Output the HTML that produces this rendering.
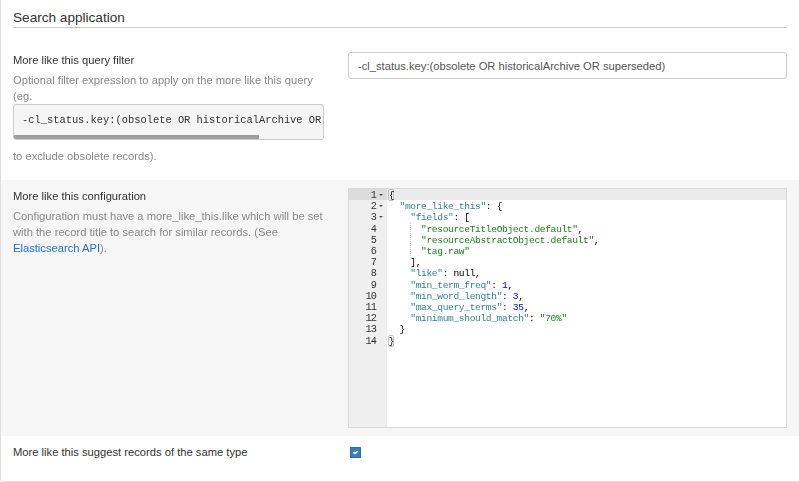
<!DOCTYPE html>
<html><head><meta charset="utf-8">
<style>
*{box-sizing:border-box}
html,body{margin:0;padding:0;background:#fff;width:799px;height:482px;overflow:hidden;position:relative;font-family:"Liberation Sans",sans-serif}
.a{position:absolute;white-space:pre}
.lbl{font-size:11.2px;line-height:16px;color:#333}
.g{will-change:transform}
.dsc{font-size:11.2px;line-height:16px;color:#888}
#lb{position:absolute;left:0;top:-20px;width:800px;height:502px;border:1px solid #ddd;border-radius:3px}
#h{left:13px;top:8px;font-size:13.6px;line-height:20px;color:#333}
#hr{position:absolute;left:13px;top:27px;width:774px;height:1px;background:#ccc}
#code1{position:absolute;left:13px;top:104px;width:311px;height:36px;background:#f5f5f5;border:1px solid #ccc;border-radius:3px;overflow:hidden}
#code1 span{will-change:transform;position:absolute;left:8px;top:7px;font-family:"Liberation Mono",monospace;font-size:10.4px;line-height:16px;color:#333;white-space:pre}
#thumb{position:absolute;left:0px;top:30px;width:245px;height:4px;background:#9e9e9e}
#inp{position:absolute;left:348px;top:52px;width:439px;height:27px;border:1px solid #ccc;border-radius:3px;background:#fff}
#inp span{position:absolute;left:9px;top:5px;font-size:11.2px;line-height:16px;color:#555;white-space:pre}
#gray{position:absolute;left:1px;top:180px;width:798px;height:256px;background:#f6f6f6}
#ed{will-change:transform;position:absolute;left:348px;top:188px;width:439px;height:240px;border:1px solid #dadada;background:#fff;overflow:hidden}
#gut{position:absolute;left:0;top:0;width:38px;height:238px;background:#efefef}
.row{position:absolute;left:0;height:11.2px;width:437px}
.ln{position:absolute;left:0;top:1px;width:27.2px;text-align:right;font-family:"Liberation Mono",monospace;font-size:10.2px;letter-spacing:-0.72px;line-height:11.2px;color:#333}
.fw{position:absolute;left:29.8px;top:4.8px;width:0;height:0;border-left:2.6px solid transparent;border-right:2.6px solid transparent;border-top:2.6px solid #555}
.cd{position:absolute;left:39.7px;top:1px;font-family:"Liberation Mono",monospace;font-size:9.6px;letter-spacing:-0.36px;line-height:11.2px;color:#000;white-space:pre}
.k{color:#318495}.s{color:#1a7f1a}.n{color:#0000cd}
#cb{position:absolute;left:350px;top:447px;width:11px;height:11px;background:#3a7ac2;border:1px solid #2d6cb2;border-radius:0.5px}
a{color:#1f6ee8;text-decoration:none}
</style></head><body>
<div id="lb"></div>
<div class="a" id="h">Search application</div>
<div id="hr"></div>

<div class="g a lbl" style="left:13px;top:52px">More like this query filter</div>
<div class="g a dsc" style="left:13px;top:72px">Optional filter expression to apply on the more like this query</div>
<div class="g a dsc" style="left:13px;top:88px">(eg.</div>
<div id="code1"><span>-cl_status.key:(obsolete OR historicalArchive OR superseded)</span><div id="thumb"></div></div>
<div class="g a dsc" style="left:13px;top:148px">to exclude obsolete records).</div>
<div id="inp"><span>-cl_status.key:(obsolete OR historicalArchive OR superseded)</span></div>

<div id="gray"></div>
<div class="g a lbl" style="left:13px;top:188px">More like this configuration</div>
<div class="g a dsc" style="left:13px;top:208px">Configuration must have a more_like_this.like which will be set</div>
<div class="g a dsc" style="left:13px;top:224px">with the record title to search for similar records. (See</div>
<div class="g a dsc" style="left:13px;top:240px"><a>Elasticsearch API</a>).</div>

<div id="ed">
  <div id="gut"></div>
  <div class="row" style="top:0;background:#ebebeb"></div>
  <div class="row" style="top:0;width:38px;background:#dcdcdc"></div>
  <div style="position:absolute;left:39px;top:0px;width:6px;height:12px;border:1px solid #c0c0c0;border-radius:2px"></div>
  <div style="position:absolute;left:39px;top:145.6px;width:6px;height:12px;border:1px solid #c0c0c0;border-radius:2px"></div>
  <div style="position:absolute;left:61px;top:33.6px;width:0;height:33.6px;border-left:1px dotted #d0d0d0"></div>
  <div id="lines"><div class="row" style="top:0.0px"><div class="ln">1</div><div class="fw"></div><div class="cd"><span class="br">{</span></div></div><div class="row" style="top:11.2px"><div class="ln">2</div><div class="fw"></div><div class="cd">  <span class="k">"more_like_this"</span>: {</div></div><div class="row" style="top:22.4px"><div class="ln">3</div><div class="fw"></div><div class="cd">    <span class="k">"fields"</span>: [</div></div><div class="row" style="top:33.6px"><div class="ln">4</div><div class="cd">      <span class="s">"resourceTitleObject.default"</span>,</div></div><div class="row" style="top:44.8px"><div class="ln">5</div><div class="cd">      <span class="s">"resourceAbstractObject.default"</span>,</div></div><div class="row" style="top:56.0px"><div class="ln">6</div><div class="cd">      <span class="s">"tag.raw"</span></div></div><div class="row" style="top:67.2px"><div class="ln">7</div><div class="cd">    ],</div></div><div class="row" style="top:78.4px"><div class="ln">8</div><div class="cd">    <span class="k">"like"</span>: null,</div></div><div class="row" style="top:89.6px"><div class="ln">9</div><div class="cd">    <span class="k">"min_term_freq"</span>: <span class="n">1</span>,</div></div><div class="row" style="top:100.8px"><div class="ln">10</div><div class="cd">    <span class="k">"min_word_length"</span>: <span class="n">3</span>,</div></div><div class="row" style="top:112.0px"><div class="ln">11</div><div class="cd">    <span class="k">"max_query_terms"</span>: <span class="n">35</span>,</div></div><div class="row" style="top:123.2px"><div class="ln">12</div><div class="cd">    <span class="k">"minimum_should_match"</span>: <span class="s">"70%"</span></div></div><div class="row" style="top:134.4px"><div class="ln">13</div><div class="cd">  }</div></div><div class="row" style="top:145.6px"><div class="ln">14</div><div class="cd"><span class="br">}</span></div></div></div>
</div>

<div class="a lbl" style="left:13px;top:444px">More like this suggest records of the same type</div>
<div id="cb"><svg width="11" height="11" viewBox="0 0 11 11" style="position:absolute;left:-1px;top:-1px"><path d="M3.6 5.5 L5 6.5 L7.4 4.5" fill="none" stroke="#fff" stroke-width="1.6" stroke-linecap="round" stroke-linejoin="round"/></svg></div>
</body></html>
